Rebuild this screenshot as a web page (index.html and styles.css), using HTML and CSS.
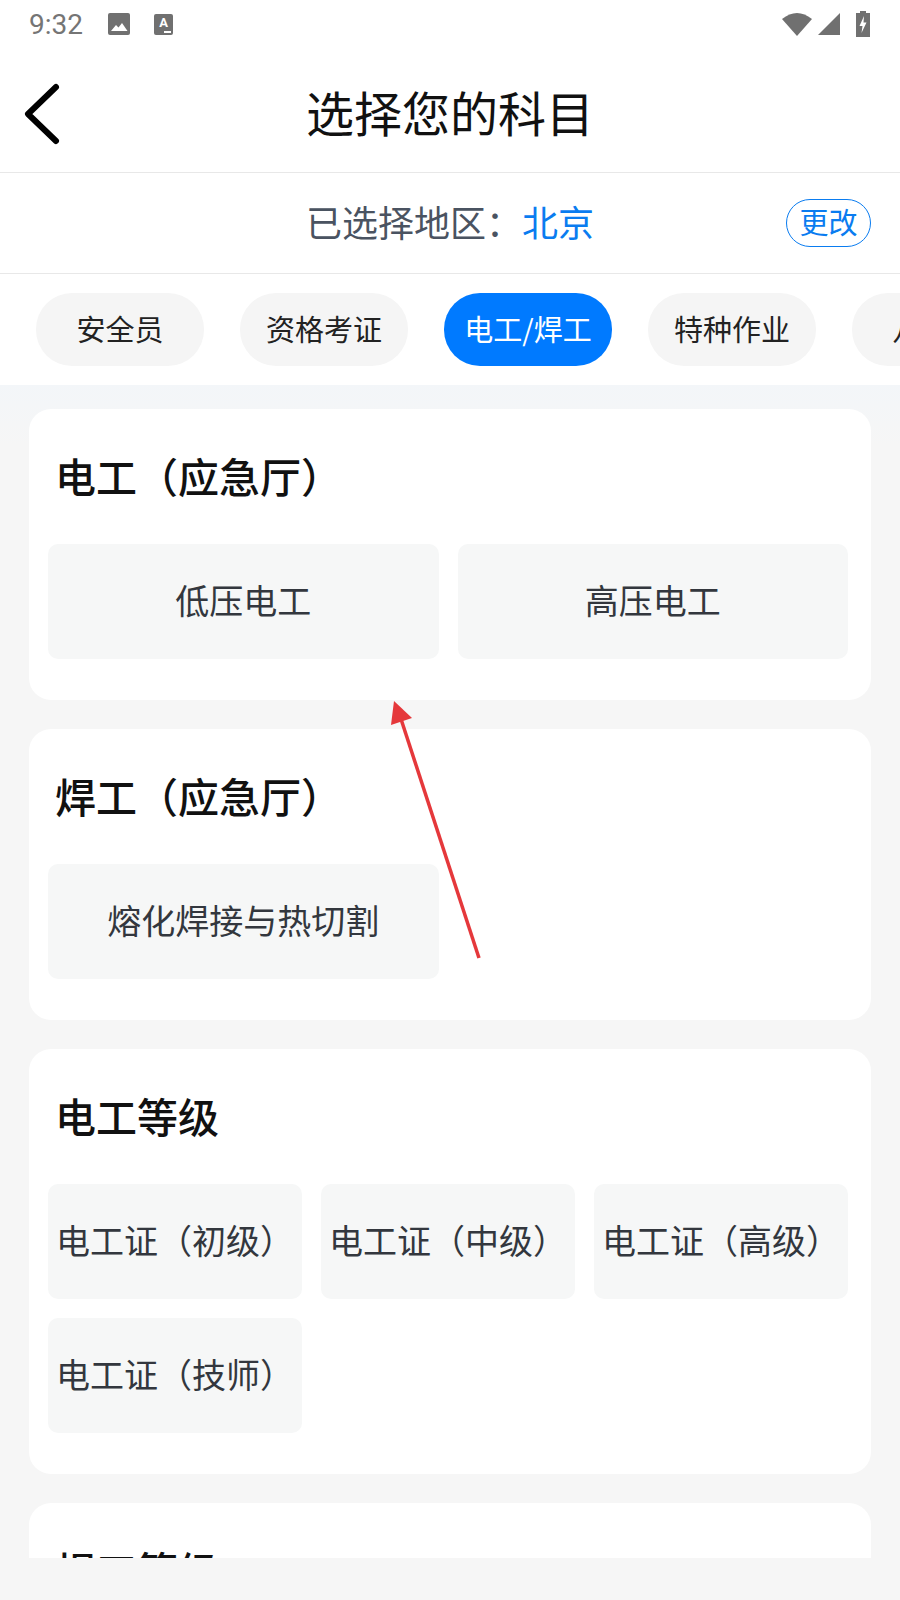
FILE: index.html
```html
<!DOCTYPE html>
<html lang="zh-CN">
  <head>
    <meta charset="UTF-8" />
    <meta name="viewport" content="width=device-width, initial-scale=1.0" />
    <title>选择您的科目</title>
    <link rel="stylesheet" href="styles.css">
  </head>
  <body>
    <div class="status-bar">
      <div class="status-left">
        <span class="time">9:32</span>
        <svg class="icon-image" width="22" height="22" viewBox="0 0 22 22">
          <rect width="22" height="22" rx="2" fill="#707070" />
          <path d="M3 18 L8 12 L10.5 14.5 L14 10 L19.5 18 Z" fill="#fff" />
        </svg>
        <span class="icon-a">A<i class="dots"></i></span>
      </div>
      <div class="status-right">
        <svg width="30" height="24" viewBox="0 0 30 24"><path d="M0 7 Q15 -5 30 7 L15 24 Z" fill="#707070" /></svg>
        <svg width="22" height="22" viewBox="0 0 22 22"><path d="M22 0 V22 H0 Z" fill="#707070" /></svg>
        <svg class="icon-battery" width="14" height="26" viewBox="0 0 14 26">
          <path d="M4 0 H10 V2 H14 V26 H0 V2 H4 Z" fill="#707070" />
          <path d="M8 5 L3.5 15 H6.5 L5.5 22 L10.5 11.5 H7.5 Z" fill="#fff" />
        </svg>
      </div>
    </div>

    <header class="header">
      <svg class="back" width="40" height="64" viewBox="0 0 40 64">
        <path d="M34 5 L6 32 L34 59" fill="none" stroke="#000" stroke-width="6" stroke-linecap="round" stroke-linejoin="round" />
      </svg>
      <h1>选择您的科目</h1>
    </header>

    <div class="region">
      <div class="region-text">已选择地区：<span class="region-name">北京</span></div>
      <button class="change">更改</button>
    </div>

    <nav class="tabs">
      <div class="tab">安全员</div>
      <div class="tab">资格考证</div>
      <div class="tab active">电工/焊工</div>
      <div class="tab">特种作业</div>
      <div class="tab">八大员</div>
    </nav>

    <main class="content">
      <section class="card">
        <h2>电工（应急厅）</h2>
        <div class="grid two">
          <div class="item">低压电工</div>
          <div class="item">高压电工</div>
        </div>
      </section>
      <section class="card">
        <h2>焊工（应急厅）</h2>
        <div class="grid two">
          <div class="item">熔化焊接与热切割</div>
        </div>
      </section>
      <section class="card">
        <h2>电工等级</h2>
        <div class="grid three">
          <div class="item">电工证（初级）</div>
          <div class="item">电工证（中级）</div>
          <div class="item">电工证（高级）</div>
          <div class="item">电工证（技师）</div>
        </div>
      </section>
      <section class="card">
        <h2>焊工等级</h2>
      </section>
    </main>

    <svg class="arrow" width="900" height="1600" viewBox="0 0 900 1600">
      <line x1="479" y1="958" x2="400" y2="716" stroke="#e5383b" stroke-width="3.5" />
      <polygon points="394,701 412,718 391,725" fill="#e5383b" />
    </svg>
  </body>
</html>
```

FILE: styles.css
```css
* {
  box-sizing: border-box;
}
body {
  margin: 0;
  width: 900px;
  height: 1600px;
  overflow: hidden;
  position: relative;
  background-color: #f6f6f6;
  font-family: "Noto Sans CJK SC", "Noto Sans", sans-serif;
}
.status-bar {
  height: 50px;
  background-color: white;
  display: flex;
  justify-content: space-between;
  align-items: center;
  padding: 0 30px 2px 29px;
}
.status-left,
.status-right {
  display: flex;
  align-items: center;
}
.time {
  font-family: Roboto, sans-serif;
  font-size: 28px;
  color: #757575;
  width: 79px;
}
.icon-a {
  position: relative;
  width: 19px;
  height: 21px;
  margin-left: 24px;
  border-radius: 2px;
  background-color: #707070;
  color: white;
  font-family: Roboto, sans-serif;
  font-size: 13px;
  font-weight: 700;
  line-height: 17px;
  text-align: center;
}
.dots {
  position: absolute;
  right: 2px;
  bottom: 2px;
  width: 7px;
  height: 2px;
  background-color: white;
}
.status-right {
  gap: 6px;
}
.icon-battery {
  margin-left: 10px;
}
.header {
  height: 123px;
  background-color: white;
  border-bottom: 1px solid #e8e8e8;
  display: grid;
  grid-template-columns: 1fr auto 1fr;
  align-items: center;
}
.back {
  margin: 6px 0 0 22px;
}
.header h1 {
  margin: 0;
  font-size: 48px;
  font-weight: 400;
  color: #111;
}
.region {
  height: 101px;
  background-color: white;
  border-bottom: 1px solid #e8e8e8;
  display: grid;
  grid-template-columns: 1fr auto 1fr;
  align-items: center;
}
.region-text {
  grid-column: 2;
  margin-top: -4px;
  font-size: 36px;
  color: #4a5361;
}
.region-name {
  color: #0a7cf0;
}
.change {
  justify-self: end;
  width: 85px;
  height: 48px;
  margin-right: 29px;
  padding: 0 0 4px;
  border: 1px solid #0a7cf0;
  border-radius: 24px;
  background-color: white;
  color: #0a7cf0;
  font-family: inherit;
  font-size: 29px;
  line-height: 1;
}
.tabs {
  height: 111px;
  background-color: white;
  display: flex;
  gap: 36px;
  align-items: flex-start;
  padding: 19px 0 0 36px;
  overflow: hidden;
}
.tab {
  flex: none;
  width: 168px;
  height: 73px;
  border-radius: 36px;
  background-color: #f5f5f5;
  color: #222;
  font-size: 29px;
  line-height: 71px;
  text-align: center;
  white-space: nowrap;
}
.tab.active {
  background-color: #007aff;
  color: white;
}
.content {
  height: 1173px;
  overflow: hidden;
  padding: 24px 29px 0;
  background: linear-gradient(#f3f6f9, #f6f6f6 60px);
}
.card {
  background-color: white;
  border-radius: 22px;
  padding: 36px 23px 41px 19px;
  margin-bottom: 29px;
}
.card h2 {
  margin: 0 0 39px 7px;
  font-size: 41px;
  font-weight: 500;
  line-height: 60px;
  color: #111;
}
.grid {
  display: grid;
  gap: 19px;
}
.grid.two {
  grid-template-columns: repeat(2, 1fr);
}
.grid.three {
  grid-template-columns: repeat(3, 1fr);
}
.item {
  height: 115px;
  border-radius: 10px;
  background-color: #f6f7f7;
  color: #33373e;
  font-size: 34px;
  line-height: 111px;
  text-align: center;
  white-space: nowrap;
}
.arrow {
  position: absolute;
  top: 0;
  left: 0;
  pointer-events: none;
}
```
